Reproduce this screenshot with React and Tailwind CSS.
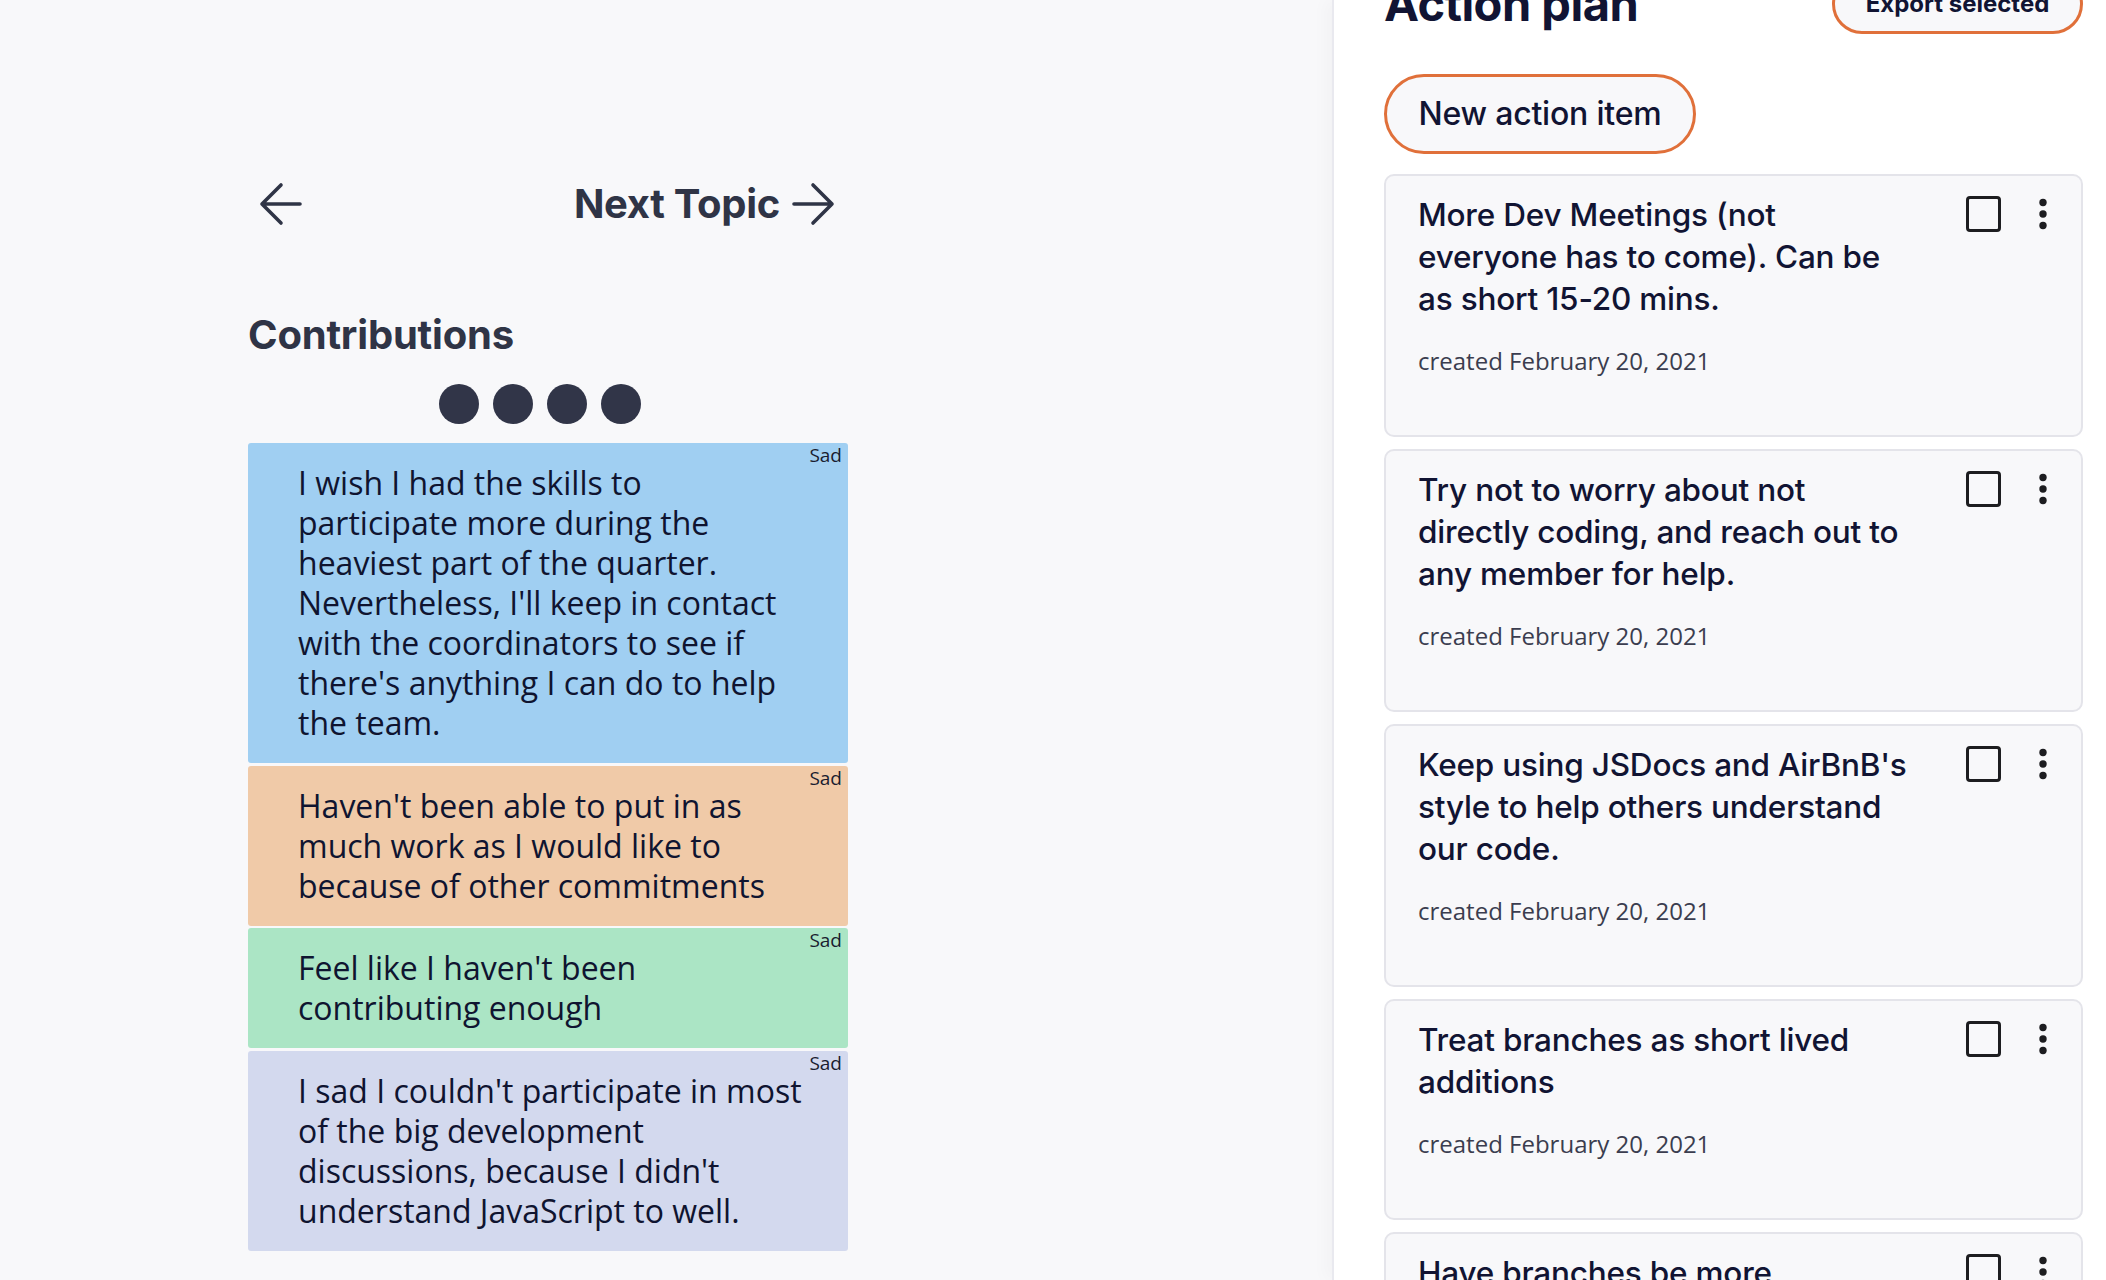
const contributions = [
  {
    bg: "bg-[#a0cff2]",
    lines: [
      "I wish I had the skills to",
      "participate more during the",
      "heaviest part of the quarter.",
      "Nevertheless, I'll keep in contact",
      "with the coordinators to see if",
      "there's anything I can do to help",
      "the team.",
    ],
  },
  {
    bg: "bg-[#f0caa8]",
    lines: ["Haven't been able to put in as", "much work as I would like to", "because of other commitments"],
  },
  {
    bg: "bg-[#abe5c5]",
    lines: ["Feel like I haven't been", "contributing enough"],
  },
  {
    bg: "bg-[#d3d9ee]",
    lines: [
      "I sad I couldn't participate in most",
      "of the big development",
      "discussions, because I didn't",
      "understand JavaScript to well.",
    ],
  },
];

const actions = [
  ["More Dev Meetings (not", "everyone has to come). Can be", "as short 15-20 mins."],
  ["Try not to worry about not", "directly coding, and reach out to", "any member for help."],
  ["Keep using JSDocs and AirBnB's", "style to help others understand", "our code."],
  ["Treat branches as short lived", "additions"],
  ["Have branches be more", "focused on a single feature"],
];

function Arrow({ flip }) {
  return (
    <svg width="44" height="44" viewBox="0 0 44 44" className={flip ? "rotate-180" : ""}>
      <path
        d="M42 22H4M23 3L4 22l19 19"
        fill="none"
        stroke="#2f3446"
        strokeWidth="3.6"
        strokeLinecap="round"
        strokeLinejoin="round"
      />
    </svg>
  );
}

function ActionCard({ lines }) {
  return (
    <div className="flex justify-between rounded-[10px] border-2 border-[#e4e4ea] bg-[#f8f8fa] pl-[32px] pr-[27px] pt-[18px] pb-[59px]">
      <div>
        <div className="text-[31.5px] leading-[42px] font-medium text-[#111433] tracking-[-0.2px]">
          {lines.map((l) => (
            <div key={l} className="whitespace-nowrap">{l}</div>
          ))}
        </div>
        <p className="mt-[26px] font-['Open_Sans',sans-serif] text-[24px] leading-[30px] text-[#3b3d4f]">
          created February 20, 2021
        </p>
      </div>
      <div className="flex items-center gap-[29px] h-[40px]">
        <div className="w-[35px] h-[36px] rounded-[4px] border-[3.5px] border-[#1d1d20]" />
        <svg width="24" height="36" viewBox="0 0 24 36">
          <circle cx="13" cy="6.5" r="3.7" fill="#1d1d20" />
          <circle cx="13" cy="18" r="3.7" fill="#1d1d20" />
          <circle cx="13" cy="29.5" r="3.7" fill="#1d1d20" />
        </svg>
      </div>
    </div>
  );
}

export default function App() {
  return (
    <div className="flex h-[1280px] overflow-hidden bg-[#f8f8fa] font-['Inter',sans-serif]">
      <div className="flex-1 pl-[248px]">
        <div className="w-[600px]">
          <div className="mt-[182px] h-[44px] flex items-center justify-between pl-[10px] pr-[12px]">
            <Arrow />
            <div className="flex items-center gap-[12px]">
              <span className="text-[40px] font-bold text-[#2f3446] tracking-[-0.3px]">Next Topic</span>
              <Arrow flip />
            </div>
          </div>
          <h2 className="mt-[86px] text-[40px] leading-[46px] font-bold text-[#2f3446] tracking-[-0.2px]">Contributions</h2>
          <div className="mt-[26px] flex justify-center gap-[14px] pr-[16px]">
            {[0, 1, 2, 3].map((i) => (
              <div key={i} className="w-[40px] h-[40px] rounded-full bg-[#313548]" />
            ))}
          </div>
          <div className="mt-[19px] flex flex-col gap-[2.5px]">
            {contributions.map((c, i) => (
              <div
                key={i}
                className={`relative ${c.bg} rounded-[3px] pl-[50px] py-[20px] font-['Open_Sans',sans-serif] text-[32px] leading-[40px] text-[#0f1430]`}
              >
                <span className="absolute top-0 right-[6px] text-[19px] leading-[24px] text-[#1a1d30]">Sad</span>
                {c.lines.map((l) => (
                  <div key={l} className="whitespace-nowrap">{l}</div>
                ))}
              </div>
            ))}
          </div>
        </div>
      </div>
      <div className="w-[774px] h-[1280px] overflow-hidden bg-white border-l-2 border-[#e9e9ef] shadow-[-8px_0_14px_rgba(0,0,0,0.025)] pl-[50px] pr-[23px]">
        <div className="-mt-[26px] h-[60px] flex items-center justify-between">
          <h1 className="text-[47px] font-bold text-[#111433] tracking-[-0.5px]">Action plan</h1>
          <button className="h-[60px] w-[251px] rounded-full border-[3px] border-[#e0703a] bg-[#f8f8fa] text-[24px] font-bold text-[#111433]">
            Export selected
          </button>
        </div>
        <button className="mt-[40px] h-[80px] w-[312px] rounded-full border-[3px] border-[#e0703a] bg-[#f8f8fa] text-[32px] font-medium text-[#111433] tracking-[-0.2px]">
          New action item
        </button>
        <div className="mt-[20px] flex flex-col gap-[12px]">
          {actions.map((a, i) => (
            <ActionCard key={i} lines={a} />
          ))}
        </div>
      </div>
    </div>
  );
}
